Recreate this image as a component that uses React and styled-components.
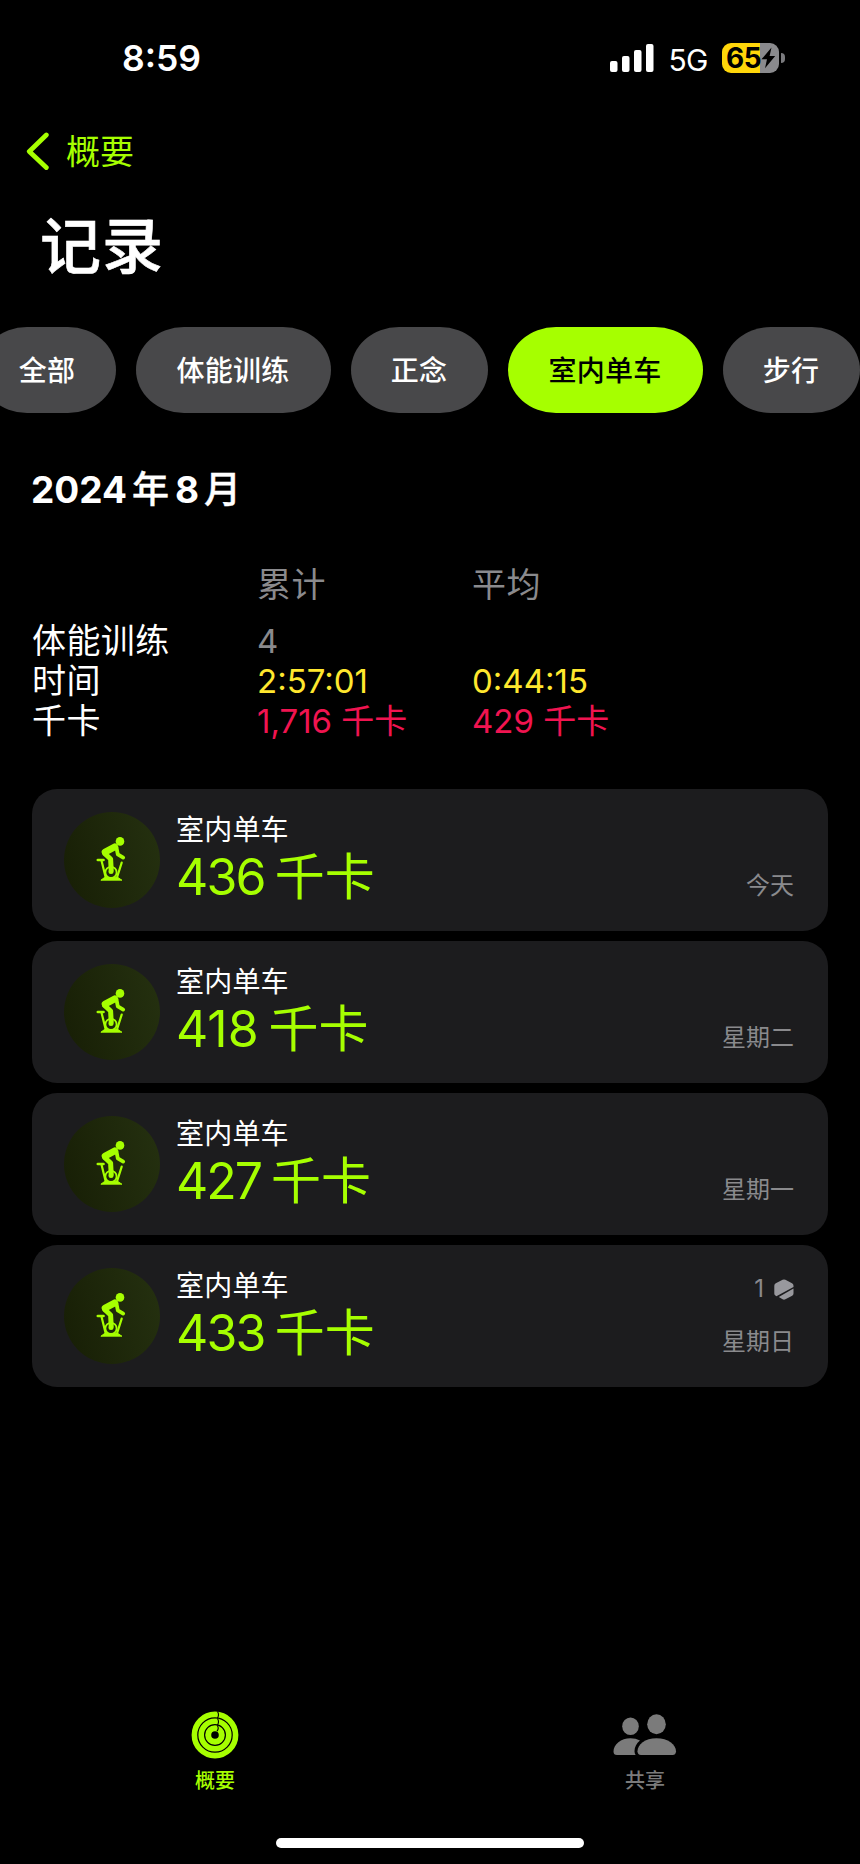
import React from "react";
import styled, { createGlobalStyle } from "styled-components";

const Colors = {
    lime: "#a6ff00",
    pill: "#48484a",
    card: "#1c1c1e",
    grey: "#8a8a8d",
    yellow: "#ffe72e",
    pink: "#f01450",
};

const GlobalStyle = createGlobalStyle`
    *{box-sizing:border-box;}
    body{margin:0;background:#000;}
`;

const Screen = styled.div`
    width:860px;height:1864px;overflow:hidden;background:#000;color:#fff;
    display:flex;flex-direction:column;
    font-family:Inter, "Noto Sans CJK SC", sans-serif;
    white-space:nowrap;
`;

const StatusBar = styled.div`
    height:116px;padding:0 75px 0 122px;
    display:flex;align-items:center;justify-content:space-between;
    & .time{font-size:35.5px;font-weight:600;line-height:48px;padding-top:2px;}
    & .right{display:flex;align-items:center;}
    & .network{font-size:30px;line-height:40px;margin:3px 14px 0 14px;letter-spacing:-0.5px;}
`;

const Battery = styled.div`
    display:flex;align-items:center;gap:2px;
    & .body{
        position:relative;width:57px;height:30px;border-radius:9px;padding-left:4px;
        background:linear-gradient(90deg,#ffd60a 66%,#8a8a8d 66%);
        color:#000;font-size:28px;font-weight:700;line-height:31px;letter-spacing:-0.5px;
    }
    & .bolt{position:absolute;right:3px;top:4px;}
    & .nub{width:4px;height:10px;border-radius:0 5px 5px 0;background:#7a7a7d;}
`;

const BackLink = styled.div`
    height:70px;padding-left:26px;display:flex;align-items:center;gap:16px;
    color:${Colors.lime};font-size:34px;line-height:48px;
    & span{padding-top:2px;}
`;

const Title = styled.h1`
    margin:14px 0 0 40px;height:94px;line-height:94px;
    font-size:61px;font-weight:500;letter-spacing:1px;
    -webkit-text-stroke:0.6px #fff;
`;

const Filters = styled.div`
    display:flex;gap:20px;margin:33px 0 0 -21px;width:900px;
`;

const Pill = styled.div`
    flex:none;width:${(p) => p.$w}px;height:86px;border-radius:48px / 43px;padding:0 1px 2px 0;
    display:flex;align-items:center;justify-content:center;
    font-size:28px;font-weight:500;letter-spacing:0.2px;
    background:${(p) => (p.$active ? Colors.lime : Colors.pill)};
    color:${(p) => (p.$active ? "#000" : "#fff")};
`;

const Month = styled.h2`
    margin:52px 0 0 31px;height:50px;line-height:50px;
    display:flex;font-size:37px;font-weight:700;
    & .unit{font-size:37px;font-weight:500;-webkit-text-stroke:0.4px #fff;margin:0 6px 0 5px;}
`;

const Summary = styled.div`
    margin:50px 0 0 32px;
    display:grid;grid-template-columns:225px 215px auto;
    grid-template-rows:56px 40px 40px 40px;
    font-size:33px;line-height:40px;
    & .label{font-size:34px;letter-spacing:0.4px;}
    & .muted{color:${Colors.grey};}
    & .time{color:${Colors.yellow};}
    & .energy{color:${Colors.pink};}
`;

const List = styled.div`
    display:flex;flex-direction:column;gap:10px;margin:48px 32px 0;
`;

const Card = styled.div`
    height:142px;border-radius:25px;background:${Colors.card};
    display:flex;padding:0 34px 0 32px;
    & .texts{flex:1;padding:23px 0 0 16px;}
    & .name{font-size:28px;line-height:36px;letter-spacing:0.2px;}
    & .value{display:flex;gap:10px;color:${Colors.lime};font-size:50px;line-height:58px;}
    & .side{
        display:flex;flex-direction:column;align-items:flex-end;justify-content:flex-end;
        padding-bottom:27px;color:${Colors.grey};font-size:24px;line-height:36px;
    }
    & .award{display:flex;align-items:center;gap:10px;margin-bottom:17px;}
`;

const Amount = styled.span`
    letter-spacing:${(p) => p.$tracking}px;
`;

const Badge = styled.div`
    flex:none;width:96px;height:96px;margin-top:23px;border-radius:50%;
    display:flex;align-items:center;justify-content:center;
    background:linear-gradient(75deg,#171e05,#253110);
`;

const TabBar = styled.div`
    margin-top:auto;height:145px;display:flex;
`;

const Tab = styled.div`
    flex:1;display:flex;flex-direction:column;align-items:center;
    color:${(p) => (p.$active ? Colors.lime : "#7b7b7b")};
    font-size:20px;font-weight:500;line-height:28px;
    & .icon{height:62px;display:flex;align-items:center;margin:11px 0 1px;}
`;

const HomeIndicator = styled.div`
    flex:none;width:308px;height:10px;border-radius:5px;background:#fff;margin:0 auto 16px;
`;

const SignalIcon = () => (
    <svg width="44" height="28" viewBox="0 0 44 28" fill="#fff">
        <rect x="0" y="17" width="7.5" height="11" rx="2" />
        <rect x="12" y="12" width="7.5" height="16" rx="2" />
        <rect x="24" y="6" width="7.5" height="22" rx="2" />
        <rect x="36" y="0" width="7.5" height="28" rx="2" />
    </svg>
);

const BikeIcon = () => (
    <svg width="32" height="46" viewBox="0 0 32 46" fill="none" stroke={Colors.lime} strokeLinecap="round" strokeLinejoin="round">
        <circle cx="24" cy="4.4" r="4.3" fill={Colors.lime} stroke="none" />
        <path d="M18.6 10 9.2 15" strokeWidth="7" />
        <path d="M8.6 16.4 14.6 22 15.2 33" strokeWidth="5" />
        <path d="M20.4 10.2 21.8 17.3 27.2 20.6" strokeWidth="3.8" />
        <path d="M1.8 23H7.5" strokeWidth="2.6" />
        <path d="M5.6 24 9.7 40.5M25.7 25.6 21 40.5" strokeWidth="2.2" />
        <circle cx="15" cy="35.4" r="5.6" strokeWidth="1.8" />
        <circle cx="15" cy="34.6" r="2.5" fill={Colors.lime} stroke="none" />
        <path d="M5.2 43 8.4 40.6H22L25.6 43Z" fill={Colors.lime} strokeWidth="1" />
    </svg>
);

const AwardIcon = () => (
    <svg width="20" height="21" viewBox="0 0 20 21" fill="#98989d">
        <path d="M8.6 .8Q10 0 11.4 .8L18 4.3Q19.5 5.1 19.5 6.7V8.1L2.4 17.2 1.4 16.5Q.3 15.8.3 14.4V6.7Q.3 5.1 1.8 4.3Z" />
        <path d="M19.5 9.6V14.4Q19.5 15.9 18.2 16.7L11.4 20.3Q10 21.1 8.6 20.3L4.8 18.1Z" />
    </svg>
);

const RingsIcon = () => (
    <svg width="48" height="48" viewBox="0 0 48 48" fill="none" stroke={Colors.lime} strokeWidth="5.6">
        <circle cx="24" cy="24" r="20.6" />
        <circle cx="24" cy="24" r="13.8" />
        <circle cx="24" cy="24" r="6.8" strokeWidth="6" />
        <path d="M26.5 .5Q28.5 3.6 26.5 7M26.5 7.5Q28.5 10.6 26.5 14M26.3 14.5Q28.3 17.4 26 20.2" stroke="#000" strokeWidth="1.1" />
    </svg>
);

const PeopleIcon = () => (
    <svg width="64" height="42" viewBox="0 0 64 42" fill="#7b7b7b">
        <ellipse cx="17.5" cy="12.3" rx="8.3" ry="8.8" />
        <ellipse cx="43.5" cy="10.2" rx="9.3" ry="10" />
        <path d="M4 41Q.5 41 .5 37.5C.5 30.5 8 24.3 17.5 24.3Q22.8 24.3 27 26.6C23.4 29.4 21.5 33.5 21.5 37.3Q21.5 39.4 22.6 41Z" />
        <path d="M28 41Q24.5 41 24.5 37.3C24.5 30.6 32 24.3 43.5 24.3S63 30.6 63 37.3Q63 41 59.5 41Z" />
    </svg>
);

const pills = [
    { text: "全部", w: 137 },
    { text: "体能训练", w: 195 },
    { text: "正念", w: 137 },
    { text: "室内单车", w: 195, active: true },
    { text: "步行", w: 137 },
];

const workouts = [
    { value: 436, day: "今天", tracking: -1.8 },
    { value: 418, day: "星期二", tracking: 0 },
    { value: 427, day: "星期一", tracking: -2 },
    { value: 433, day: "星期日", tracking: -1.8, awards: 1 },
];

const App = () => {
    return (
        <>
            <GlobalStyle />
            <Screen>
                <StatusBar>
                    <div className="time">8:59</div>
                    <div className="right">
                        <SignalIcon />
                        <div className="network">5G</div>
                        <Battery>
                            <div className="body">
                                65
                                <svg className="bolt" width="15" height="22" viewBox="0 0 15 22">
                                    <path d="M10.5 .5 .5 12.3H6L4 21.3 14.2 9H8.6Z" fill="#000" />
                                </svg>
                            </div>
                            <div className="nub" />
                        </Battery>
                    </div>
                </StatusBar>
                <BackLink>
                    <svg width="24" height="38" viewBox="0 0 24 38" fill="none" stroke={Colors.lime} strokeWidth="4.8" strokeLinecap="round" strokeLinejoin="round">
                        <path d="M20.3 3 3.3 19.4 20.3 35.6" />
                    </svg>
                    <span>概要</span>
                </BackLink>
                <Title>记录</Title>
                <Filters>
                    {pills.map((p) => (
                        <Pill key={p.text} $w={p.w} $active={p.active}>{p.text}</Pill>
                    ))}
                </Filters>
                <Month>
                    <span>2024</span><span className="unit">年</span>
                    <span>8</span><span className="unit">月</span>
                </Month>
                <Summary>
                    <div />
                    <div className="label muted">累计</div>
                    <div className="label muted">平均</div>
                    <div className="label">体能训练</div>
                    <div className="muted">4</div>
                    <div />
                    <div className="label">时间</div>
                    <div className="time">2:57:01</div>
                    <div className="time">0:44:15</div>
                    <div className="label">千卡</div>
                    <div className="energy">1,716 千卡</div>
                    <div className="energy">429 千卡</div>
                </Summary>
                <List>
                    {workouts.map((w) => (
                        <Card key={w.day}>
                            <Badge><BikeIcon /></Badge>
                            <div className="texts">
                                <div className="name">室内单车</div>
                                <div className="value">
                                    <Amount $tracking={w.tracking}>{w.value}</Amount>
                                    <span>千卡</span>
                                </div>
                            </div>
                            <div className="side">
                                {w.awards && <div className="award">{w.awards}<AwardIcon /></div>}
                                <div>{w.day}</div>
                            </div>
                        </Card>
                    ))}
                </List>
                <TabBar>
                    <Tab $active>
                        <div className="icon"><RingsIcon /></div>
                        概要
                    </Tab>
                    <Tab>
                        <div className="icon"><PeopleIcon /></div>
                        共享
                    </Tab>
                </TabBar>
                <HomeIndicator />
            </Screen>
        </>
    );
};
export default App;
